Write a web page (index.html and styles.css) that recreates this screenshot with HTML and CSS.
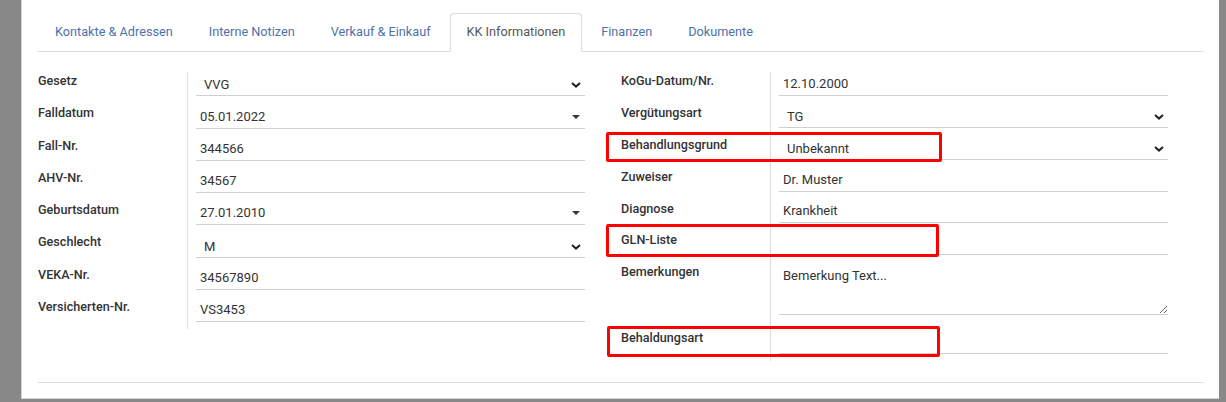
FILE: index.html
```html
<!DOCTYPE html>
<html lang="de">
<head>
	<meta charset="UTF-8">
	<meta name="viewport" content="width=device-width, initial-scale=1.0">
	<title>KK Informationen</title>
	<link rel="stylesheet" href="styles.css">
</head>
<body>
	<div class="panel">
		<ul class="tabs">
			<li><a href="#">Kontakte &amp; Adressen</a></li>
			<li><a href="#">Interne Notizen</a></li>
			<li><a href="#">Verkauf &amp; Einkauf</a></li>
			<li class="active"><a href="#">KK Informationen</a></li>
			<li><a href="#">Finanzen</a></li>
			<li><a href="#">Dokumente</a></li>
		</ul>

		<div class="form">
			<div class="col col-left">
				<div class="row first">
					<div class="lbl">Gesetz</div>
					<div class="fld"><div class="ctl sel"><span>VVG</span><svg class="chev" width="10" height="6" viewBox="0 0 10 6"><path d="M1 1l4 3.6L9 1"/></svg></div></div>
				</div>
				<div class="row">
					<div class="lbl">Falldatum</div>
					<div class="fld"><div class="ctl"><span>05.01.2022</span><svg class="caret" width="8" height="4" viewBox="0 0 8 4"><path d="M0 0h8L4 4z"/></svg></div></div>
				</div>
				<div class="row">
					<div class="lbl">Fall-Nr.</div>
					<div class="fld"><div class="ctl"><span>344566</span></div></div>
				</div>
				<div class="row">
					<div class="lbl">AHV-Nr.</div>
					<div class="fld"><div class="ctl"><span>34567</span></div></div>
				</div>
				<div class="row">
					<div class="lbl">Geburtsdatum</div>
					<div class="fld"><div class="ctl"><span>27.01.2010</span><svg class="caret" width="8" height="4" viewBox="0 0 8 4"><path d="M0 0h8L4 4z"/></svg></div></div>
				</div>
				<div class="row">
					<div class="lbl">Geschlecht</div>
					<div class="fld"><div class="ctl sel"><span>M</span><svg class="chev" width="10" height="6" viewBox="0 0 10 6"><path d="M1 1l4 3.6L9 1"/></svg></div></div>
				</div>
				<div class="row">
					<div class="lbl">VEKA-Nr.</div>
					<div class="fld"><div class="ctl"><span>34567890</span></div></div>
				</div>
				<div class="row">
					<div class="lbl">Versicherten-Nr.</div>
					<div class="fld"><div class="ctl"><span>VS3453</span></div></div>
				</div>
				<div class="row spacer"><div class="lbl"></div><div class="fld"></div></div>
			</div>

			<div class="col col-right">
				<div class="row first">
					<div class="lbl">KoGu-Datum/Nr.</div>
					<div class="fld"><div class="ctl"><span>12.10.2000</span></div></div>
				</div>
				<div class="row">
					<div class="lbl">Vergütungsart</div>
					<div class="fld"><div class="ctl sel"><span>TG</span><svg class="chev" width="10" height="6" viewBox="0 0 10 6"><path d="M1 1l4 3.6L9 1"/></svg></div></div>
				</div>
				<div class="row">
					<div class="lbl">Behandlungsgrund</div>
					<div class="fld"><div class="ctl sel"><span>Unbekannt</span><svg class="chev" width="10" height="6" viewBox="0 0 10 6"><path d="M1 1l4 3.6L9 1"/></svg></div></div>
				</div>
				<div class="row">
					<div class="lbl">Zuweiser</div>
					<div class="fld"><div class="ctl"><span>Dr. Muster</span></div></div>
				</div>
				<div class="row">
					<div class="lbl">Diagnose</div>
					<div class="fld"><div class="ctl"><span>Krankheit</span></div></div>
				</div>
				<div class="row">
					<div class="lbl">GLN-Liste</div>
					<div class="fld"><div class="ctl"><span></span></div></div>
				</div>
				<div class="row row-text">
					<div class="lbl">Bemerkungen</div>
					<div class="fld"><textarea class="area">Bemerkung Text...</textarea></div>
				</div>
				<div class="row row-last">
					<div class="lbl">Behaldungsart</div>
					<div class="fld"><div class="ctl"><span></span></div></div>
				</div>
				<div class="row spacer"><div class="lbl"></div><div class="fld"></div></div>
			</div>
		</div>

		<div class="foot"></div>

		<!-- markierungen -->
		<div class="mark m1"></div>
		<div class="mark m2"></div>
		<div class="mark m3"></div>
	</div>
</body>
</html>
```

FILE: styles.css
```css
html, body{ margin: 0; padding: 0; }
body{
	background: #888; font-family: Roboto, "Liberation Sans", sans-serif;
	font-size: 13px; color: #333; overflow: hidden;
}
.panel{
	position: relative; box-sizing: border-box;
	margin-left: 21px; width: 1198px; height: 399px;
	padding: 13px 15px 0 16px; background: #fff;
	border-left: 1px solid #d4d4d4; border-bottom: 1px solid #d4d4d4;
	overflow: hidden;
}

/* tabs */
.tabs{
	list-style: none; margin: 0; padding: 0; display: flex;
	border-bottom: 1px solid #ddd;
}
.tabs li{ margin-bottom: -1px; }
.tabs a{
	display: block; margin-right: 2px; padding: 9px 16px 10px;
	font-size: 12.7px; line-height: 18px; color: #4d72ab; text-decoration: none;
	border: 1px solid transparent; border-radius: 4px 4px 0 0;
}
.tabs .active a{
	color: #555; background: #fff;
	border-color: #ddd #ddd transparent;
}

/* form */
.form{
	display: grid; grid-template-columns: 547px 547px; column-gap: 36px;
	margin-top: 12px;
}
.row{ display: flex; height: 32.3px; }
.col-right .row{ height: 31.9px; }
.lbl{
	width: 149px; flex: none; padding-top: 9px; box-sizing: border-box;
	font-size: 12.6px; line-height: 15px; font-weight: 500; color: #333;
}
.fld{
	flex: 1; display: flex; align-items: flex-end;
	border-left: 1px solid #ddd; padding-left: 8px; min-width: 0;
}
.row.first .fld{ margin-top: 8px; }
.col .row.spacer{ height: 7px; }
.spacer .lbl{ padding: 0; }

.ctl{
	flex: 1; display: flex; align-items: flex-start; box-sizing: border-box;
	height: 20px; padding: 0 4px 4px 4px; line-height: 15px;
	border-bottom: 1px solid #cfcfcf; color: #333;
}
.ctl span{ flex: 1; }
.ctl.sel{ padding: 1px 4px 3px 8px; }
.chev{ margin-top: 5px; }
.chev path{ fill: none; stroke: #222; stroke-width: 2; }
.caret{ margin-top: 6px; margin-right: 1px; }
.caret path{ fill: #333; }

.col-right .row-text{ height: 60px; }
.area{
	flex: 1; box-sizing: border-box; height: 52px; margin: 0;
	padding: 5px 4px; border: 0; border-bottom: 1px solid #cfcfcf;
	font-family: Roboto, "Liberation Sans", sans-serif; font-size: 13px;
	line-height: 15px; color: #333; resize: vertical; outline: none;
}
.col-right .row-last{ height: 38.5px; }
.row-last .lbl{ padding-top: 15px; }

.foot{ margin-top: 21px; border-top: 1px solid #ddd; }

/* rote markierungen */
.mark{
	position: absolute; box-sizing: border-box;
	border: 3px solid #f00; border-radius: 2px;
}
.m1{ left: 584px; top: 132px; width: 336px; height: 30px; }
.m2{ left: 584px; top: 224px; width: 333px; height: 33px; }
.m3{ left: 585px; top: 326px; width: 333px; height: 31px; }
```
